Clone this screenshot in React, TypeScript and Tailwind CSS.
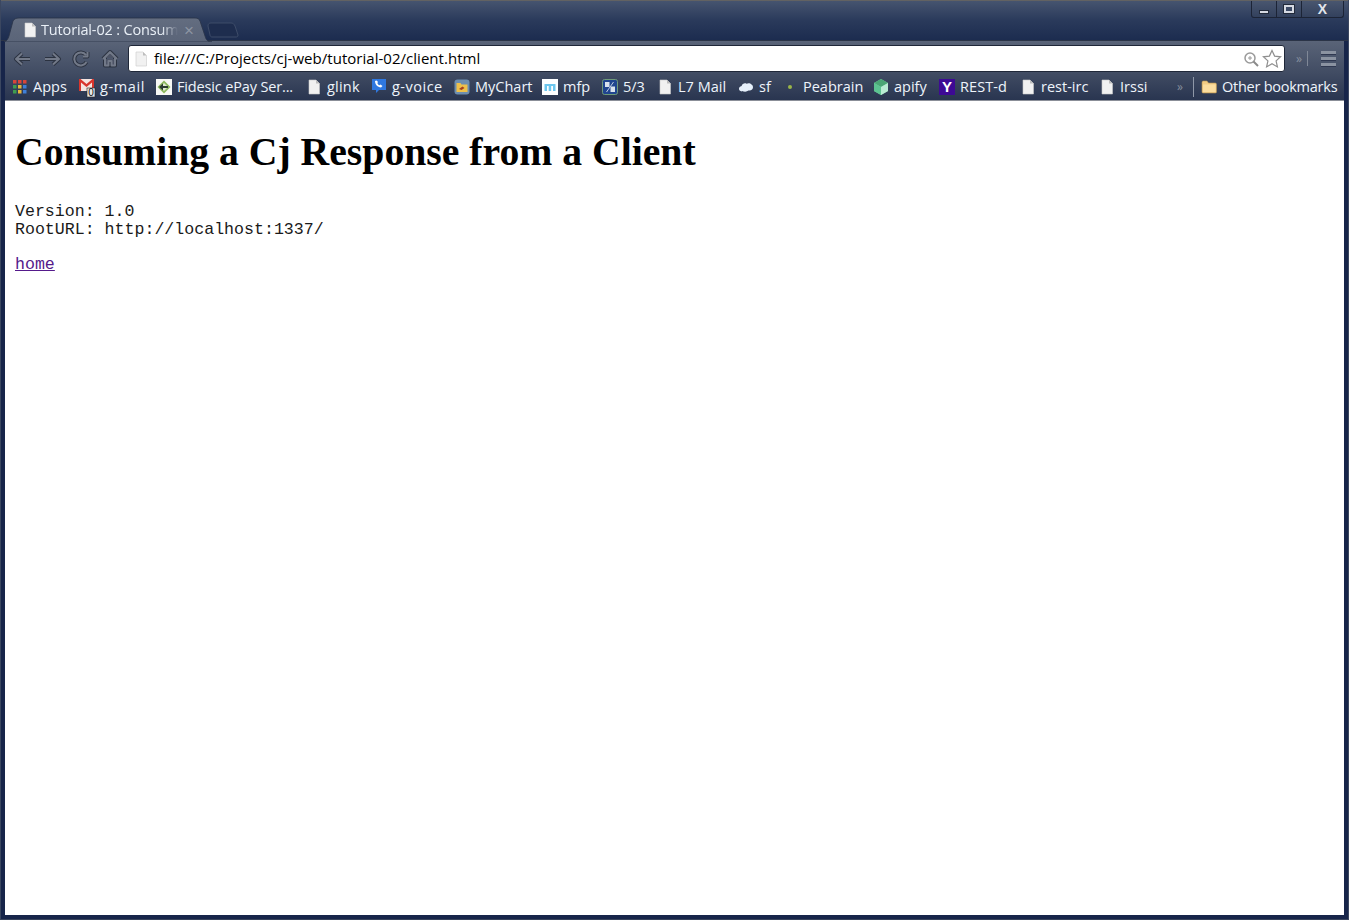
import type { ReactNode } from "react";

const chromeFont = "font-['Open_Sans','Noto_Sans',sans-serif]";

function PageIcon({ className = "" }: { className?: string }) {
  return (
    <svg width="16" height="16" viewBox="0 0 16 16" className={className}>
      <path d="M3 1h7l3.500 3.500V15H3z" fill="#f1f1f1" stroke="#c9c9c9" strokeWidth="0.6" />
      <path d="M10 1v3.500h3.500z" fill="#bdbdbd" />
    </svg>
  );
}

function Bookmark({ icon, label, textClass }: { icon: ReactNode; label: string; textClass: string }) {
  return (
    <div className="flex items-center gap-[5px] mr-3 shrink-0">
      <span className="w-4 h-4 flex items-center justify-center shrink-0">{icon}</span>
      <span className={`${textClass} text-[14.500px] leading-5 text-[#eef4fb] whitespace-nowrap`}>{label}</span>
    </div>
  );
}

const AppsIcon = (
  <svg width="14" height="14" viewBox="0 0 14 14">
    {[
      ["#d9453a", "#d9453a", "#d9453a"],
      ["#3f9d4f", "#e8b53a", "#3f7fd8"],
      ["#3f9d4f", "#e8b53a", "#3f7fd8"],
    ].flatMap((row, y) =>
      row.map((c, x) => <rect key={`${x}-${y}`} x={x * 5} y={y * 5} width="3.500" height="3.500" fill={c} />)
    )}
  </svg>
);

const GmailIcon = (
  <svg width="16" height="16" viewBox="0 0 16 16" className="overflow-visible">
    <rect x="0" y="0" width="15" height="12" fill="#f4e4e0" />
    <path d="M0 0v12h2V3.500l5.500 4.500L13 3.500V12h2V0h-1.500L7.500 5 1.500 0z" fill="#d8352c" />
    <rect x="8" y="9" width="8" height="9" fill="#e9e9e9" stroke="#222" strokeWidth="0.600" />
    <text x="12" y="17" textAnchor="middle" fontSize="10" fontFamily="Liberation Sans" fill="#111">0</text>
  </svg>
);

const FidesicIcon = (
  <svg width="16" height="16" viewBox="0 0 16 16">
    <rect width="16" height="16" fill="#f7f8f5" />
    <path d="M8 1.500l6.500 6.500L8 14.500 1.500 8z" fill="#8db85f" />
    <path d="M8 4L4 8l4 4 4-4z" fill="#dfe9d2" />
    <path d="M3 8l4-3.500V7h5v2H7v2.500z" fill="#2a3a30" />
  </svg>
);

const VoiceIcon = (
  <svg width="16" height="16" viewBox="0 0 16 16">
    <path d="M1 0h14v11H8l-3 3v-3H1z" fill="#2f78e0" />
    <path d="M4 2c0 3.500 2.500 6 6 6.500l1.500-1.500-2-1.500-1 .8C7.500 6 6.800 5 6.300 4l.8-1L5.500 1.500z" fill="#fff" />
  </svg>
);

const MyChartIcon = (
  <svg width="16" height="16" viewBox="0 0 16 16">
    <rect x="0.500" y="0.500" width="15" height="15" rx="3" fill="#6d8eb0" />
    <path d="M2.500 4h4l1 1.500h6V13h-11z" fill="#eec04a" />
    <path d="M5 10l3.500-2.500 2 1.500-3 2z" fill="#a6401f" />
  </svg>
);

const MfpIcon = (
  <svg width="16" height="16" viewBox="0 0 16 16">
    <rect width="16" height="16" fill="#fdfeff" />
    <path d="M2.500 12V5h2.500v7zM6.700 12V5h2.500v7zM11 12V5h2.500v7zM2.500 5h11v2h-11z" fill="#6cc6ee" />
  </svg>
);

const FifthThirdIcon = (
  <svg width="16" height="16" viewBox="0 0 16 16">
    <rect x="0.500" y="0.500" width="15" height="15" rx="2" fill="#20458f" stroke="#6f9a7a" />
    <rect x="3" y="3" width="4.500" height="5" fill="#d9e2ee" />
    <rect x="8.500" y="7.500" width="4.500" height="5.500" fill="#d9e2ee" />
    <path d="M11.500 3L4.500 13" stroke="#e8eef5" strokeWidth="0.800" />
  </svg>
);

const CloudIcon = (
  <svg width="16" height="12" viewBox="0 0 16 12">
    <path d="M4 10.500C1.500 10.500.5 8.500 1.200 6.800 1.800 5.500 3 5.300 3.600 5 4.200 2.800 6.800 1.700 8.500 2.800c1.500-1 4-.7 5 .8 1.500.7 2 3 1 4.500-1 1.600-2.800 1.500-4 1.500-1.800 1.500-4.300 1.400-6.500.4z" fill="#e6f0fb" />
  </svg>
);

const DotIcon = <span className="w-[4px] h-[4px] rounded-full bg-[#9ab548]" />;

const ApifyIcon = (
  <svg width="16" height="16" viewBox="0 0 16 16">
    <path d="M8 0l7 4v8l-7 4-7-4V4z" fill="#7fd3a8" />
    <path d="M8 0l7 4-7 4-7-4z" fill="#4aa675" />
    <path d="M8 8l7-4v8l-7 4z" fill="#b9ecd3" />
    <path d="M1 4l7 4v8l-7-4z" fill="#5cc391" />
  </svg>
);

const YahooIcon = (
  <span className="w-4 h-4 bg-[#3d0a94] text-white flex items-center justify-center text-[15px] font-bold font-['Liberation_Sans',sans-serif] leading-none">
    Y
  </span>
);

const FolderIcon = (
  <svg width="16" height="14" viewBox="0 0 16 14">
    <path d="M1 2.500C1 1.700 1.500 1 2.300 1H6l1.500 2h6.700c.8 0 1.300.6 1.300 1.300V12c0 .7-.5 1-1.200 1H2.200C1.500 13 1 12.600 1 12z" fill="#f2cc85" stroke="#b69354" strokeWidth="0.600" />
    <rect x="2" y="4.500" width="12.500" height="7.500" fill="#fbdd9f" />
  </svg>
);

function NavIcon({ d, fill = "none" }: { d: string; fill?: string }) {
  return (
    <svg width="20" height="20" viewBox="0 0 20 20" className="shrink-0">
      <path d={d} fill={fill} stroke="#2b3240" strokeWidth="4" strokeLinejoin="round" />
      <path d={d} fill={fill} stroke="#727988" strokeWidth="2" strokeLinejoin="round" />
    </svg>
  );
}

export default function App() {
  return (
    <div className="w-[1349px] h-[920px] bg-[#17254a] flex flex-col overflow-hidden px-[4px] pb-[4px] border-x border-x-[#3b4760] border-b border-b-[#39445c]">
      {/* title bar + tabs */}
      <div className="relative h-[41px] -mx-[5px] px-[5px] shrink-0 bg-gradient-to-b from-[#46546f] via-[#2a3a5b] to-[#1c2c4f] border-t border-t-[#626262] border-b border-b-[#2b3447]">
        <div className="absolute right-[5px] top-0 flex h-[17px] w-[93px] rounded-b-[3px] border border-t-0 border-[#1c2436] bg-gradient-to-b from-[#49566f] to-[#33415d]">
          <div className="w-[25px] border-r border-[#1c2436] flex items-center justify-center pt-[6px]">
            <span className="w-[10px] h-[4px] bg-[#d6dae2] border border-[#222a3a]" />
          </div>
          <div className="w-[25px] border-r border-[#1c2436] flex items-center justify-center">
            <span className="w-[10px] h-[8px] border-2 border-[#d6dae2] outline outline-1 outline-[#222a3a]" />
          </div>
          <div className="flex-1 flex items-center justify-center text-[14px] leading-none font-bold text-[#e2e5eb] font-['Liberation_Sans',sans-serif]">
            X
          </div>
        </div>

        {/* active tab shape */}
        <svg width="240" height="26" viewBox="0 0 240 26" className="absolute left-[4px] top-[15px]">
          <defs>
            <linearGradient id="tab" x1="0" y1="0" x2="0" y2="1">
              <stop offset="0" stopColor="#636d80" />
              <stop offset="1" stopColor="#5a6478" />
            </linearGradient>
          </defs>
          <path d="M204 10c0-2 1-3 3-3h20c2 0 3 1 4 3l3 9c0 2-1 2-3 2h-23c-1 0-2-1-2-2z" fill="#1e2d4e" stroke="#45536e" strokeWidth="0.800" />
          <path d="M0 26c3-1 4-3 5-6l4-15c1-2 3-3 6-3h176c3 0 4 1 5 3l5 15c1 4 3 6 7 6z" fill="url(#tab)" stroke="#2a3347" strokeWidth="0.800" />
        </svg>
        <div className={`absolute left-[22px] top-[19px] flex items-center ${chromeFont}`}>
          <PageIcon />
          <span className="ml-[3px] w-[137px] overflow-hidden whitespace-nowrap text-[14.500px] leading-[20px] text-[#eaf0f7] tracking-[-0.15px] [mask-image:linear-gradient(to_right,black_88%,transparent)]">
            Tutorial-02 : Consum
          </span>
          <span className="ml-[6px] text-[17px] leading-none text-[#8d95a3] font-['Liberation_Sans',sans-serif]">×</span>
        </div>
      </div>

      {/* toolbar */}
      <div className="h-[32px] shrink-0 flex items-center pt-[3px] pl-[8px] bg-gradient-to-b from-[#5a6478] to-[#414c63]">
        <div className="flex items-center gap-[9px] mr-[8px]">
          <NavIcon d="M9 4.500L3 10l6 5.500M3 10h14" />
          <NavIcon d="M11 4.500L17 10l-6 5.500M17 10H3" />
          <NavIcon d="M15.500 13a6.500 6.500 0 1 1-.5-7M16.500 3v4.500H12" />
          <NavIcon d="M3 10l7-7 7 7M5 9v7.500h3.500V12h3v4.500H15V9" fill="#4c5365" />
        </div>
        <div className={`w-[1157px] h-[27px] shrink-0 bg-white rounded-[3px] border border-[#1f2738] flex items-center pl-[4px] pr-[2px] ${chromeFont}`}>
          <PageIcon className="shrink-0" />
          <span className="ml-[5px] pb-[2px] text-[15px] leading-5 text-black whitespace-nowrap tracking-[0.03px]">
            file:///C:/Projects/cj-web/tutorial-02/client.html
          </span>
          <svg width="16" height="16" viewBox="0 0 16 16" className="ml-auto shrink-0">
            <circle cx="7" cy="7" r="5" fill="none" stroke="#9a9a9a" strokeWidth="1.500" />
            <path d="M10.500 10.500L15 15" stroke="#8a8a8a" strokeWidth="2" />
            <path d="M5 7h4M7 5v4" stroke="#9a9a9a" />
          </svg>
          <svg width="20" height="20" viewBox="0 0 20 20" className="ml-[3px] shrink-0">
            <path d="M10 1.500l2.600 5.600 6 .7-4.500 4.100 1.300 6-5.400-3.100-5.400 3.100 1.300-6L1.400 7.800l6-.7z" fill="#fff" stroke="#8f8f8f" strokeWidth="1.200" />
          </svg>
        </div>
        <span className="ml-[11px] w-[7px] shrink-0 text-[12px] leading-none text-[#868e9d]">»</span>
        <span className="ml-[4px] h-[15px] w-px shrink-0 bg-[#808897]" />
        <div className="ml-[13px] flex flex-col gap-[2px] w-[15px] shrink-0">
          <span className="h-[4px] bg-[#8b93a1] border-b border-[#2f3850]" />
          <span className="h-[4px] bg-[#8b93a1] border-b border-[#2f3850]" />
          <span className="h-[4px] bg-[#8b93a1] border-b border-[#2f3850]" />
        </div>
      </div>

      {/* bookmarks bar */}
      <div className={`h-[27px] shrink-0 flex items-center pl-[7px] bg-gradient-to-b from-[#414c63] to-[#293550] ${chromeFont}`}>
        <Bookmark icon={AppsIcon} label="Apps" textClass="w-[34px]" />
        <Bookmark icon={GmailIcon} label="g-mail" textClass="w-[44px] tracking-[0.6px]" />
        <Bookmark icon={FidesicIcon} label="Fidesic ePay Ser..." textClass="w-[117px] tracking-[-0.15px]" />
        <Bookmark icon={<PageIcon />} label="glink" textClass="w-[32px] tracking-[0.2px]" />
        <Bookmark icon={VoiceIcon} label="g-voice" textClass="w-[50px] tracking-[0.5px]" />
        <Bookmark icon={MyChartIcon} label="MyChart" textClass="w-[55px]" />
        <Bookmark icon={MfpIcon} label="mfp" textClass="w-[27px]" />
        <Bookmark icon={FifthThirdIcon} label="5/3" textClass="w-[22px]" />
        <Bookmark icon={<PageIcon />} label="L7 Mail" textClass="w-[48px]" />
        <Bookmark icon={CloudIcon} label="sf" textClass="w-[11px]" />
        <Bookmark icon={DotIcon} label="Peabrain" textClass="w-[58px]" />
        <Bookmark icon={ApifyIcon} label="apify" textClass="w-[33px]" />
        <Bookmark icon={YahooIcon} label="REST-d" textClass="w-[48px] tracking-[0.1px]" />
        <Bookmark icon={<PageIcon />} label="rest-irc" textClass="w-[46px]" />
        <Bookmark icon={<PageIcon />} label="Irssi" textClass="w-[25px]" />
        <span className="ml-[20px] w-[7px] shrink-0 text-[12px] leading-none text-[#868e9d]">»</span>
        <span className="ml-[9px] mr-[7px] h-[20px] w-px shrink-0 bg-[#8f98a8]" />
        <Bookmark icon={FolderIcon} label="Other bookmarks" textClass="w-[114px] tracking-[-0.25px]" />
      </div>

      {/* page */}
      <div className="flex-1 bg-white px-[10px] border-t border-t-[#8b8f98] font-['Liberation_Serif',serif] text-black">
        <h1 className="mt-[28px] text-[39.700px] leading-[46px] font-bold whitespace-nowrap">Consuming a Cj Response from a Client</h1>
        <pre className="mt-[28px] font-['Liberation_Mono',monospace] text-[16.600px] leading-[18px] text-[#1a1a1a]">
          {"Version: 1.0\nRootURL: http://localhost:1337/"}
        </pre>
        <a href="#home" className="block mt-[17px] font-['Liberation_Mono',monospace] text-[16.600px] leading-[18px] text-[#551a8b] underline">
          home
        </a>
      </div>
    </div>
  );
}
